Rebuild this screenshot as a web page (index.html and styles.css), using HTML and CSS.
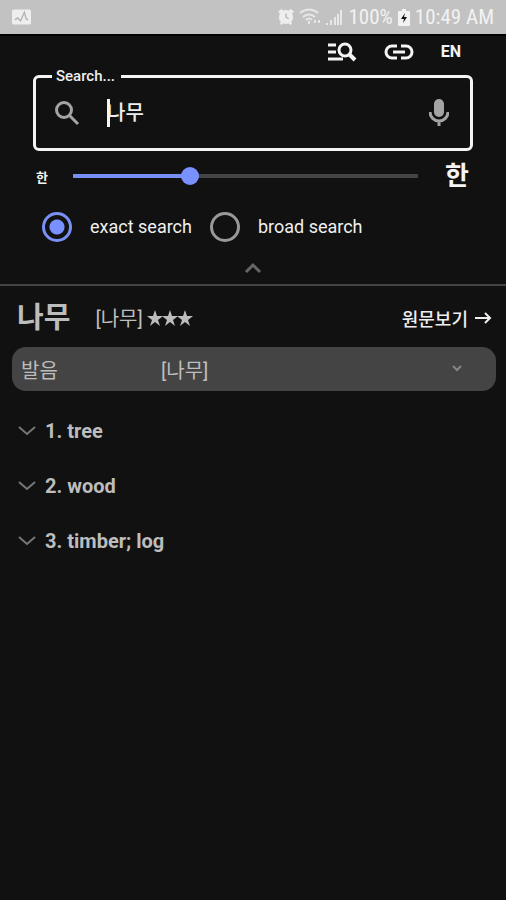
FILE: index.html
```html
<!DOCTYPE html>
<html lang="ko">
<head>
<meta charset="utf-8">
<meta name="viewport" content="width=device-width, initial-scale=1">
<title>나무</title>
<link rel="stylesheet" href="styles.css">
</head>
<body>
<div class="status">
  <svg class="status-app" width="19" height="16" viewBox="0 0 20 16"><rect width="20" height="16" rx="2" fill="#eee"/><path d="M3 11l3-2 3 3 4-9 2 7 2 1" fill="none" stroke="#b4b4b4" stroke-width="1.5"/></svg>
  <div class="status-right">
    <svg width="16" height="16" viewBox="0 0 18 18"><path d="M1 4l4-3M17 4l-4-3M3 17l2-2M15 17l-2-2" stroke="#eee" stroke-width="3"/><circle cx="9" cy="9" r="8" fill="#eee"/><path d="M9 5v4l3 2" fill="none" stroke="#b4b4b4" stroke-width="1.500"/></svg>
    <svg width="22" height="18" viewBox="0 0 22 18" fill="none" stroke="#e8e8e8" stroke-width="2"><path d="M1 5q9-7 18 0M4 9q6-5 12 0M7 12q3-3 6 0"/><path d="M10 13v3M16 15v-3M20 12v3" stroke-width="2"/></svg>
    <svg width="17" height="17" viewBox="0 0 17 17" fill="#e8e8e8"><path d="M0 14h2v2H0zM4 11h2v5H4zM8 8h2v8H8zM11 5h2v11h-2zM14 1h2v15h-2z"/></svg>
    <span class="status-text">100%</span>
    <svg width="12" height="17" viewBox="0 0 12 17"><path d="M4 0h4v2h3q1 0 1 1v13q0 1-1 1H1q-1 0-1-1V3q0-1 1-1h3z" fill="#f2f2f2"/><path d="M7 4L3 10h3l-1 4 4-6H6z" fill="#111"/></svg>
    <span class="status-text">10:49 AM</span>
  </div>
</div>

<header class="panel">
  <nav class="tools">
    <button class="tool" aria-label="Search list"><svg width="30" height="20" viewBox="0 0 30 20" fill="none" stroke="#f4f4f4" stroke-width="3"><path d="M1 3h8M1 10h8M1 17h15"/><circle cx="18" cy="8" r="6"/><path d="M22 12l6 6" stroke-width="4"/></svg></button>
    <button class="tool" aria-label="Link"><svg width="30" height="16" viewBox="0 0 30 16" fill="none" stroke="#f4f4f4" stroke-width="3"><path d="M13 2H8a6 6 0 0 0 0 12h5M17 2h5a6 6 0 0 1 0 12h-5M9 8h12"/></svg></button>
    <button class="tool lang">EN</button>
  </nav>

  <form class="search">
    <fieldset class="box">
      <legend><label for="q">Search...</label></legend>
      <svg width="26" height="26" viewBox="0 0 26 26" fill="none" stroke="#a4a4a4" stroke-width="3"><circle cx="10" cy="10" r="7.500"/><path d="M15 15l9 9"/></svg>
      <div class="field"><input id="q" type="text" value="나무"></div>
      <svg width="20" height="28" viewBox="0 0 20 28"><rect x="5" y="0" width="10" height="18" rx="5" fill="#a4a4a4"/><path d="M1 13a9 9 0 0 0 18 0M10 21v6" fill="none" stroke="#a4a4a4" stroke-width="3"/></svg>
    </fieldset>

    <div class="sizes">
      <label class="small" for="size">한</label>
      <input id="size" class="slider" type="range" min="0" max="100" value="33">
      <span class="large">한</span>
    </div>

    <div class="modes">
      <label class="mode"><input type="radio" name="mode" checked>exact search</label>
      <label class="mode"><input type="radio" name="mode">broad search</label>
    </div>
  </form>
  <button class="collapse" aria-label="Collapse"><svg width="18" height="12" viewBox="0 0 18 12" fill="none" stroke="#666" stroke-width="3"><path d="M2 10l7-7 7 7"/></svg></button>
</header>

<main class="entry">
  <div class="head">
    <h1>나무</h1>
    <span class="reading">[나무]</span>
    <svg class="stars" width="46" height="16" viewBox="0 0 46 16" fill="#bdbdbd" role="img" aria-label="3"><path id="star" d="M8 0l2 6h6l-5 4 2 6-5-4-5 4 2-6-5-4h6z"/><use href="#star" x="15"/><use href="#star" x="30"/></svg>
    <a class="source" href="#">원문보기 <svg width="17" height="12" viewBox="0 0 17 12" fill="none" stroke="#eee" stroke-width="2"><path d="M0 6h15M10 1l5 5-5 5"/></svg></a>
  </div>

  <button class="sound">
    <span>발음</span><span>[나무]</span>
    <svg width="12" height="8" viewBox="0 0 12 8" fill="none" stroke="#858585" stroke-width="2"><path d="M2 1l4 4 4-4"/></svg>
  </button>

  <div class="senses">
    <button class="sense"><svg width="18" height="12" viewBox="0 0 18 12"><path d="M1 2l8 7 8-7"/></svg>1. tree</button>
    <button class="sense"><svg width="18" height="12" viewBox="0 0 18 12"><path d="M1 2l8 7 8-7"/></svg>2. wood</button>
    <button class="sense"><svg width="18" height="12" viewBox="0 0 18 12"><path d="M1 2l8 7 8-7"/></svg>3. timber; log</button>
  </div>
</main>
</body>
</html>
```
FILE: styles.css
```css
* { box-sizing: border-box; }

body {
  margin: 0;
  min-height: 100vh;
  background: #111;
  color: #bdbdbd;
  font-family: Roboto, "Noto Sans CJK KR", sans-serif;
}

button {
  padding: 0;
  border: 0;
  background: none;
  color: inherit;
  font: inherit;
}

svg { display: block; flex: none; }

.status {
  display: flex;
  align-items: center;
  justify-content: space-between;
  height: 36px;
  padding: 0 12px;
  border-bottom: 2px solid #000;
  background: #c2c2c2;
}

.status-right {
  display: flex;
  align-items: center;
  gap: 5px;
}

.status-text {
  color: #f2f2f2;
  font-family: "Roboto Condensed", Roboto, sans-serif;
  font-size: 21px;
  line-height: 24px;
}

.panel { border-bottom: 2px solid #444; }

.tools {
  display: flex;
  align-items: center;
  justify-content: flex-end;
  gap: 27px;
  height: 31px;
  padding-right: 45px;
}

.lang {
  color: #f4f4f4;
  font-size: 16px;
  font-weight: 700;
}

.search { padding: 0 33px; }

.box {
  display: flex;
  align-items: center;
  height: 84px;
  margin: 0;
  padding: 0 21px 8px 18px;
  border: 3px solid #f4f4f4;
  border-radius: 6px;
}

.box legend {
  height: 19px;
  margin-left: -2px;
  padding: 0 6px 0 4px;
  color: #eee;
  font-size: 15px;
  font-weight: 500;
  line-height: 19px;
}

.field {
  position: relative;
  flex: 1;
  min-width: 0;
  margin-left: 27px;
}

.field::before {
  content: "";
  position: absolute;
  top: 0;
  left: 0;
  width: 3px;
  height: 28px;
  background: #f4f4f4;
}

.field input {
  display: block;
  width: 100%;
  height: 28px;
  padding: 0;
  border: 0;
  outline: 0;
  background: none;
  color: #eee;
  font: 500 20px/28px Roboto, "Noto Sans CJK KR", sans-serif;
}

.sizes {
  display: flex;
  align-items: center;
  height: 50px;
  color: #f4f4f4;
  font-weight: 700;
}

.small { width: 40px; padding-left: 3px; font-size: 13px; }
.large { padding: 0 4px 0 27px; font-size: 26px; line-height: 32px; }

.slider {
  flex: 1;
  min-width: 0;
  height: 18px;
  margin: 0;
  appearance: none;
  background:
    linear-gradient(#768ef5, #768ef5) left center / 34% 4px no-repeat,
    linear-gradient(#444, #444) center / 100% 4px no-repeat;
}

.slider::-webkit-slider-thumb {
  appearance: none;
  width: 18px;
  height: 18px;
  border-radius: 50%;
  background: #7990ff;
}

.modes {
  display: flex;
  gap: 18px;
  height: 51px;
  padding-left: 9px;
}

.mode {
  display: flex;
  align-items: center;
  gap: 18px;
  color: #f0f0f0;
  font-size: 18px;
}

.mode input {
  appearance: none;
  width: 30px;
  height: 30px;
  margin: 0;
  border: 3px solid #999;
  border-radius: 50%;
}

.mode input:checked {
  border-color: #7990f5;
  background: radial-gradient(circle, #7990ff 7px, transparent 8px);
}

.collapse {
  display: flex;
  align-items: center;
  justify-content: center;
  width: 100%;
  height: 32px;
}

.entry { padding: 0 10px 0 12px; }

.head {
  display: flex;
  align-items: center;
  height: 61px;
  padding: 2px 4px 0 5px;
}

.head h1 {
  margin: 0 25px 0 0;
  font-size: 29px;
  line-height: 40px;
}

.reading { font-size: 20px; }
.stars { margin-left: 4px; }

.source {
  display: flex;
  align-items: center;
  gap: 7px;
  margin-left: auto;
  color: #eee;
  font-size: 18px;
  font-weight: 500;
  text-decoration: none;
}

.sound {
  display: grid;
  grid-template-columns: 140px 1fr auto;
  align-items: center;
  width: 100%;
  height: 44px;
  padding: 0 33px 0 9px;
  border-radius: 14px;
  background: #444;
  font-size: 20px;
  text-align: left;
}

.senses { padding: 12px 0 0 6px; }

.sense {
  display: flex;
  align-items: center;
  gap: 9px;
  width: 100%;
  height: 55px;
  font-size: 20px;
  font-weight: 700;
}

.sense path {
  fill: none;
  stroke: #777;
  stroke-width: 2;
}
```
